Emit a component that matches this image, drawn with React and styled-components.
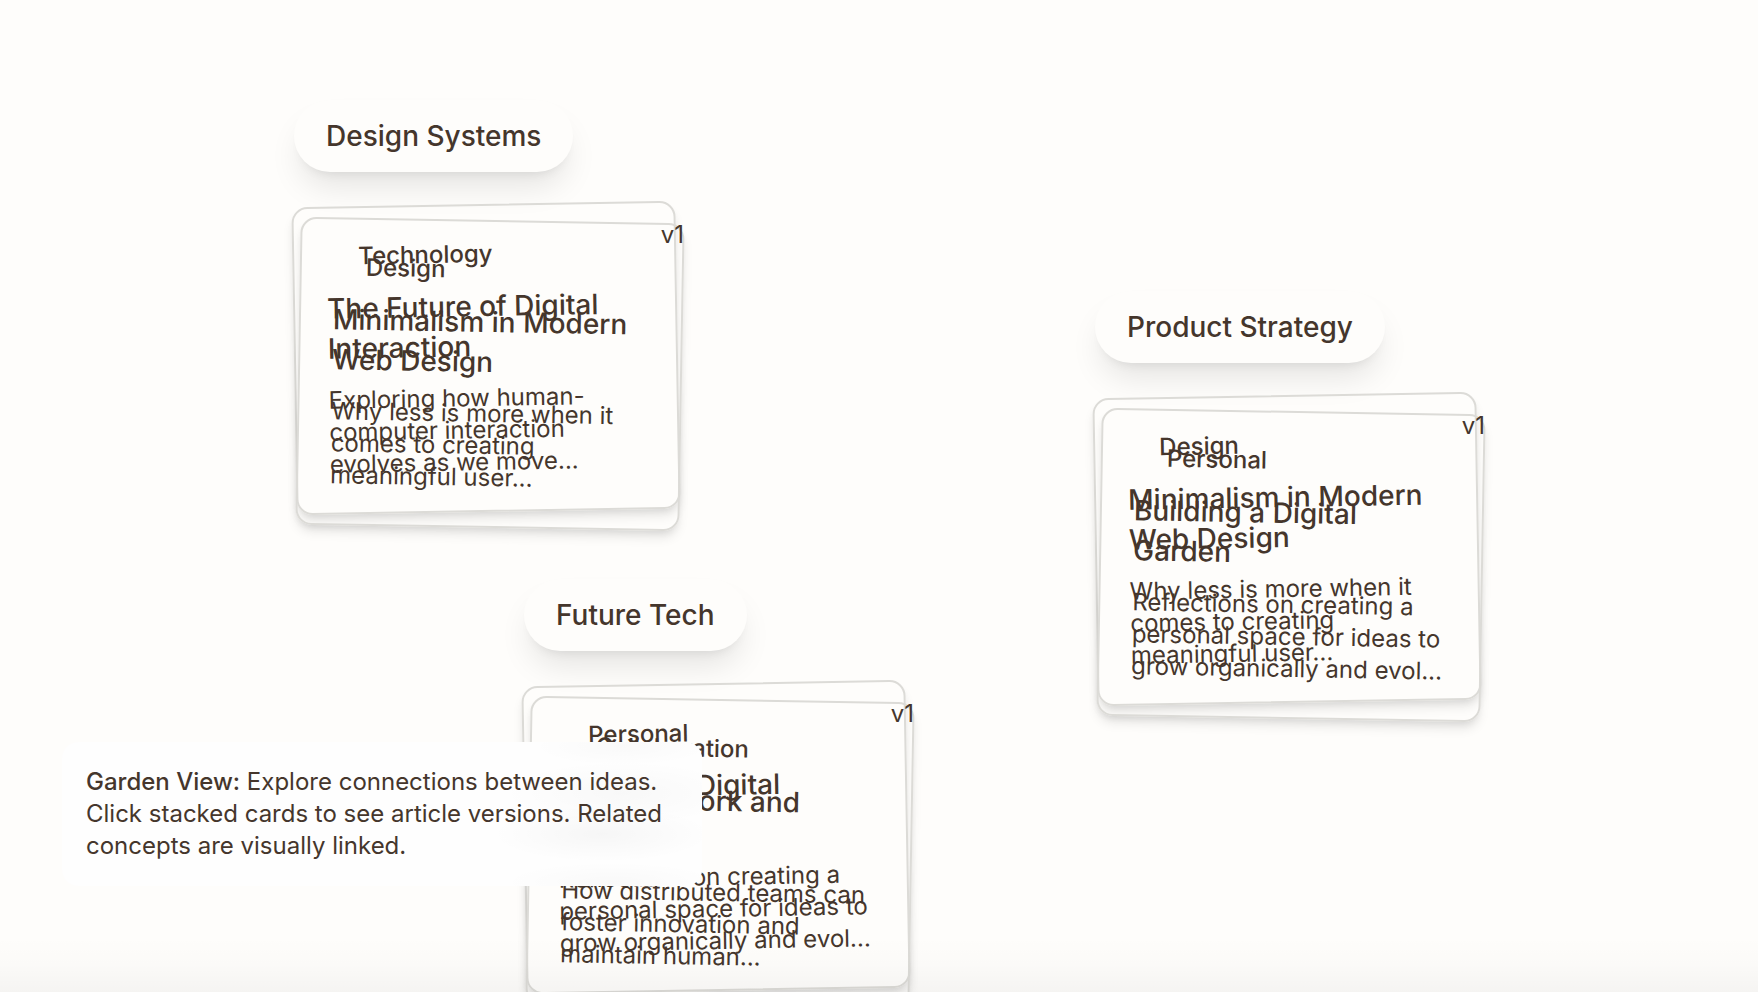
import React from "react";
import styled, { createGlobalStyle } from "styled-components";

const ink = "#45362c";
const paper = "#fefdfb";

const GlobalStyle = createGlobalStyle`
  * { box-sizing: border-box; }
  body {
    margin: 0;
    background: ${paper};
    color: ${ink};
    font-family: Inter, "Liberation Sans", sans-serif;
    font-size: 24px;
    line-height: 32px;
  }
  h2, h3, p { margin: 0; }
`;

const Garden = styled.main`
  position: relative;
  height: 100vh;
  overflow: hidden;
  background: ${paper};
`;

/* A cluster is a node on the free garden canvas. */
const Cluster = styled.section`
  position: absolute;
  left: ${(p) => p.$x}px;
  top: ${(p) => p.$y}px;
  display: flex;
  flex-direction: column;
  align-items: flex-start;
  gap: 32px;
`;

const Topic = styled.h2`
  padding: 16px 32px;
  border-radius: 36px;
  background: ${paper};
  box-shadow: 0 20px 32px -6px rgba(0, 0, 0, 0.1), 0 8px 12px -8px rgba(0, 0, 0, 0.1);
  font-size: 28px;
  line-height: 40px;
  font-weight: 500;
`;

const Stack = styled.div`
  position: relative;
  display: grid;
  width: 384px;
`;

const Card = styled.article`
  grid-area: 1 / 1;
  display: flex;
  flex-direction: column;
  gap: 16px;
  padding: 32px;
  border: 2px solid #dcdbd7;
  border-radius: 16px;
  box-shadow: 0 8px 12px -2px rgba(0, 0, 0, 0.1), 0 4px 8px -4px rgba(0, 0, 0, 0.1);
  transform: ${(p) => (p.$back ? "translate(4px, 16px) rotate(1deg)" : "rotate(-1deg)")};
`;

const Category = styled.p`
  padding-left: 32px;
  font-weight: 500;
`;

const Title = styled.h3`
  min-height: 80px;
  font-size: 28px;
  line-height: 40px;
  font-weight: 500;
`;

const Excerpt = styled.p`
  min-height: 96px;
`;

const Version = styled.span`
  position: absolute;
  top: 15px;
  right: -6px;
`;

const Hint = styled.aside`
  position: absolute;
  left: 62px;
  bottom: 106px;
  width: 640px;
  padding: 24px;
  border-radius: 16px;
  background:
    radial-gradient(ellipse 90px 20px at 560px 4px, rgba(0, 0, 0, 0.02), transparent),
    radial-gradient(ellipse 120px 32px at 560px 51px, rgba(0, 0, 0, 0.025), transparent),
    radial-gradient(ellipse 110px 28px at 540px 92px, rgba(0, 0, 0, 0.03), transparent),
    radial-gradient(ellipse 110px 20px at 550px 140px, rgba(0, 0, 0, 0.02), transparent),
    #fefefe;

  strong { font-weight: 500; }
`;

const Fade = styled.div`
  position: absolute;
  inset: auto 0 0;
  height: 56px;
  background: linear-gradient(rgba(0, 0, 0, 0), rgba(0, 0, 0, 0.012) 50%, rgba(0, 0, 0, 0.035));
  pointer-events: none;
`;

const minimalism = {
  category: "Design",
  title: "Minimalism in Modern Web Design",
  excerpt: "Why less is more when it comes to creating meaningful user...",
};
const building = {
  category: "Personal",
  title: "Building a Digital Garden",
  excerpt: "Reflections on creating a personal space for ideas to grow organically and evol...",
};
const future = {
  category: "Technology",
  title: "The Future of Digital Interaction",
  excerpt: "Exploring how human-computer interaction evolves as we move...",
};
const remote = {
  category: "Collaboration",
  title: "Remote Work and Creativity",
  excerpt: "How distributed teams can foster innovation and maintain human...",
};

const clusters = [
  { topic: "Design Systems", x: 294, y: 100, cards: [future, minimalism] },
  { topic: "Product Strategy", x: 1095, y: 291, cards: [minimalism, building] },
  { topic: "Future Tech", x: 524, y: 579, cards: [building, remote] },
];

export default function App() {
  return (
    <Garden>
      <GlobalStyle />
      {clusters.map(({ topic, x, y, cards }) => (
        <Cluster key={topic} $x={x} $y={y}>
          <Topic>{topic}</Topic>
          <Stack>
            {cards.map((card, i) => (
              <Card key={card.title} $back={i === 1}>
                <Category>{card.category}</Category>
                <Title>{card.title}</Title>
                <Excerpt>{card.excerpt}</Excerpt>
              </Card>
            ))}
            <Version>v1</Version>
          </Stack>
        </Cluster>
      ))}
      <Hint>
        <p>
          <strong>Garden View:</strong> Explore connections between ideas. Click stacked cards to
          see article versions. Related concepts are visually linked.
        </p>
      </Hint>
      <Fade />
    </Garden>
  );
}
